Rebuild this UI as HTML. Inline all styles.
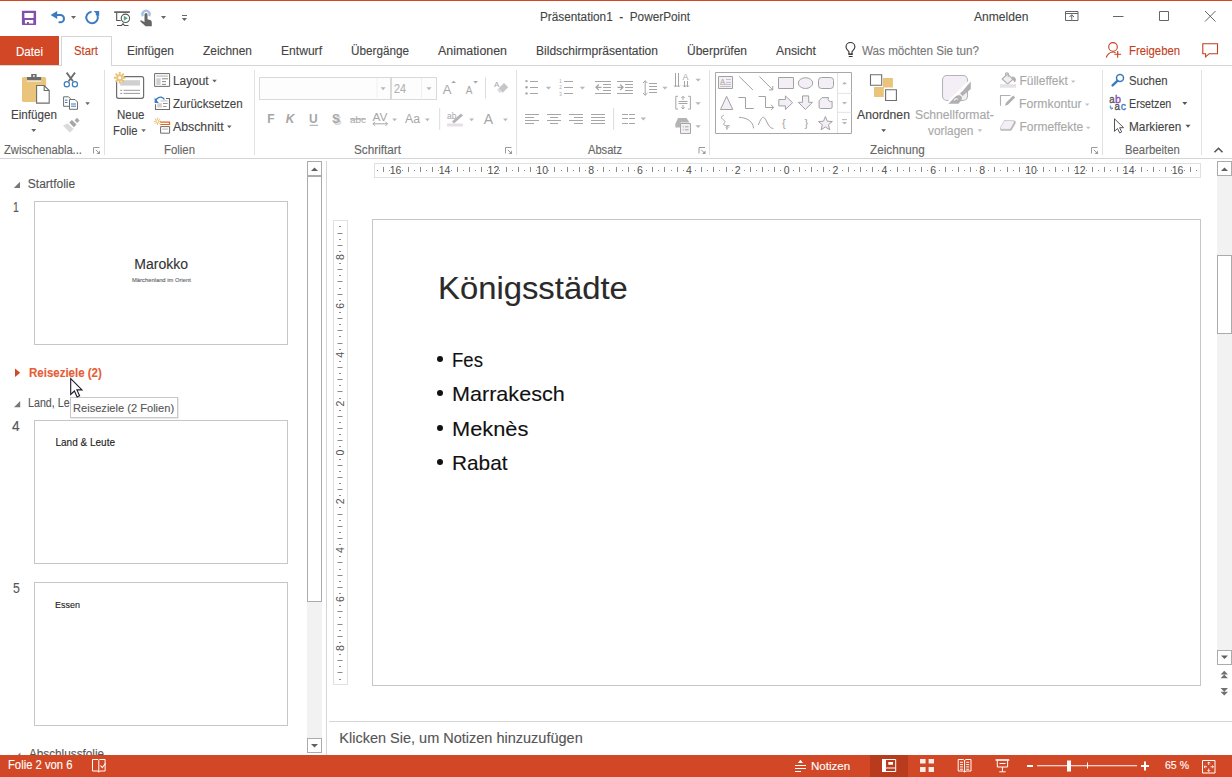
<!DOCTYPE html><html><head><meta charset="utf-8"><style>
html,body{margin:0;padding:0;width:1232px;height:777px;overflow:hidden;background:#fff;position:relative;font-family:"Liberation Sans",sans-serif}
.t{position:absolute;white-space:pre;transform-origin:0 0;-webkit-text-stroke:0.12px currentColor}
svg{overflow:visible}
</style></head><body>
<div style="position:absolute;left:0px;top:0px;width:1232px;height:1px;background:#d24726"></div>
<div class="t" style="left:540.00px;top:10.84px;font-size:12px;line-height:12px;color:#444;transform:scaleX(0.9819);">Präsentation1  -  PowerPoint</div>
<div class="t" style="left:974.00px;top:10.84px;font-size:12px;line-height:12px;color:#444;transform:scaleX(1.0081);">Anmelden</div>
<div style="position:absolute;left:0px;top:36px;width:59px;height:29px;background:#d24726"></div>
<div class="t" style="left:16.00px;top:45.84px;font-size:12px;line-height:12px;color:#fff;transform:scaleX(0.9636);">Datei</div>
<div style="position:absolute;left:61px;top:36px;width:51px;height:30px;background:#fff;border:1px solid #d5d5d5;border-bottom:none;box-sizing:border-box"></div>
<div style="position:absolute;left:0px;top:65px;width:61px;height:1px;background:#d5d5d5"></div>
<div style="position:absolute;left:112px;top:65px;width:1120px;height:1px;background:#d5d5d5"></div>
<div class="t" style="left:74.00px;top:45.04px;font-size:12px;line-height:12px;color:#c43e1c;transform:scaleX(0.9479);">Start</div>
<div class="t" style="left:127.00px;top:45.04px;font-size:12px;line-height:12px;color:#444;transform:scaleX(0.9916);">Einfügen</div>
<div class="t" style="left:203.00px;top:45.04px;font-size:12px;line-height:12px;color:#444;transform:scaleX(0.9923);">Zeichnen</div>
<div class="t" style="left:281.00px;top:45.04px;font-size:12px;line-height:12px;color:#444;transform:scaleX(1.0079);">Entwurf</div>
<div class="t" style="left:351.00px;top:45.04px;font-size:12px;line-height:12px;color:#444;transform:scaleX(0.9764);">Übergänge</div>
<div class="t" style="left:438.00px;top:45.04px;font-size:12px;line-height:12px;color:#444;transform:scaleX(1.0342);">Animationen</div>
<div class="t" style="left:536.00px;top:45.04px;font-size:12px;line-height:12px;color:#444;transform:scaleX(1.0051);">Bildschirmpräsentation</div>
<div class="t" style="left:687.00px;top:45.04px;font-size:12px;line-height:12px;color:#444;">Überprüfen</div>
<div class="t" style="left:776.00px;top:45.04px;font-size:12px;line-height:12px;color:#444;transform:scaleX(1.0163);">Ansicht</div>
<div class="t" style="left:862.00px;top:45.34px;font-size:12px;line-height:12px;color:#777;transform:scaleX(0.9726);">Was möchten Sie tun?</div>
<div class="t" style="left:1128.50px;top:45.34px;font-size:12px;line-height:12px;color:#c43e1c;transform:scaleX(0.9452);">Freigeben</div>
<div style="position:absolute;left:0px;top:158px;width:1232px;height:1px;background:#d5d5d5"></div>
<div style="position:absolute;left:104px;top:70px;width:1px;height:85px;background:#e1e1e1"></div>
<div style="position:absolute;left:254px;top:70px;width:1px;height:85px;background:#e1e1e1"></div>
<div style="position:absolute;left:516px;top:70px;width:1px;height:85px;background:#e1e1e1"></div>
<div style="position:absolute;left:709px;top:70px;width:1px;height:85px;background:#e1e1e1"></div>
<div style="position:absolute;left:1102px;top:70px;width:1px;height:85px;background:#e1e1e1"></div>
<div style="position:absolute;left:1201px;top:70px;width:1px;height:85px;background:#e1e1e1"></div>
<div class="t" style="left:4.00px;top:144.44px;font-size:12px;line-height:12px;color:#666;transform:scaleX(0.9353);">Zwischenabla...</div>
<div class="t" style="left:163.50px;top:144.44px;font-size:12px;line-height:12px;color:#666;transform:scaleX(0.9480);">Folien</div>
<div class="t" style="left:354.00px;top:144.44px;font-size:12px;line-height:12px;color:#666;transform:scaleX(0.9792);">Schriftart</div>
<div class="t" style="left:588.00px;top:144.44px;font-size:12px;line-height:12px;color:#666;transform:scaleX(0.9274);">Absatz</div>
<div class="t" style="left:870.00px;top:144.44px;font-size:12px;line-height:12px;color:#666;transform:scaleX(0.9761);">Zeichnung</div>
<div class="t" style="left:1124.70px;top:144.44px;font-size:12px;line-height:12px;color:#666;transform:scaleX(0.9428);">Bearbeiten</div>
<div class="t" style="left:10.50px;top:108.84px;font-size:12px;line-height:12px;color:#444;transform:scaleX(0.9705);">Einfügen</div>
<div class="t" style="left:116.50px;top:108.84px;font-size:12px;line-height:12px;color:#444;transform:scaleX(0.9589);">Neue</div>
<div class="t" style="left:113.00px;top:124.84px;font-size:12px;line-height:12px;color:#444;transform:scaleX(0.9409);">Folie</div>
<div class="t" style="left:173.40px;top:74.84px;font-size:12px;line-height:12px;color:#444;transform:scaleX(0.9872);">Layout</div>
<div class="t" style="left:173.00px;top:97.84px;font-size:12px;line-height:12px;color:#444;transform:scaleX(0.9659);">Zurücksetzen</div>
<div class="t" style="left:173.00px;top:120.54px;font-size:12px;line-height:12px;color:#444;transform:scaleX(1.0247);">Abschnitt</div>
<div class="t" style="left:857.00px;top:108.64px;font-size:12px;line-height:12px;color:#444;transform:scaleX(1.0169);">Anordnen</div>
<div class="t" style="left:915.00px;top:108.64px;font-size:12px;line-height:12px;color:#a8a8a8;transform:scaleX(1.0176);">Schnellformat-</div>
<div class="t" style="left:928.00px;top:125.34px;font-size:12px;line-height:12px;color:#a8a8a8;transform:scaleX(0.9865);">vorlagen</div>
<div class="t" style="left:1019.40px;top:74.54px;font-size:12px;line-height:12px;color:#a8a8a8;">Fülleffekt</div>
<div class="t" style="left:1019.40px;top:97.54px;font-size:12px;line-height:12px;color:#a8a8a8;transform:scaleX(1.0199);">Formkontur</div>
<div class="t" style="left:1019.40px;top:120.84px;font-size:12px;line-height:12px;color:#a8a8a8;">Formeffekte</div>
<div class="t" style="left:1129.00px;top:74.84px;font-size:12px;line-height:12px;color:#444;transform:scaleX(0.9464);">Suchen</div>
<div class="t" style="left:1129.00px;top:97.54px;font-size:12px;line-height:12px;color:#444;transform:scaleX(0.8935);">Ersetzen</div>
<div class="t" style="left:1129.00px;top:121.24px;font-size:12px;line-height:12px;color:#444;transform:scaleX(0.9824);">Markieren</div>
<div style="position:absolute;left:259px;top:77px;width:132px;height:23px;border:1px solid #d9d9d9;box-sizing:border-box;background:#fdfdfd"></div>
<div style="position:absolute;left:391px;top:77px;width:46px;height:23px;border:1px solid #d9d9d9;box-sizing:border-box;background:#fdfdfd"></div>
<div class="t" style="left:394.00px;top:82.84px;font-size:12px;line-height:12px;color:#b0b0b0;transform:scaleX(0.9009);">24</div>
<div class="t" style="left:27.80px;top:177.64px;font-size:12px;line-height:12px;color:#555;">Startfolie</div>
<div class="t" style="left:13.00px;top:199.85px;font-size:14px;line-height:14px;color:#555;transform:scaleX(0.7465);">1</div>
<div style="position:absolute;left:34px;top:201px;width:254px;height:144px;border:1px solid #c6c6c6;box-sizing:border-box;background:#fff"></div>
<div class="t" style="left:134.30px;top:256.95px;font-size:14px;line-height:14px;color:#333;">Marokko</div>
<div class="t" style="left:131.70px;top:277.94px;font-size:5.5px;line-height:5.5px;color:#666;transform:scaleX(1.0569);">Märchenland im Orient</div>
<div class="t" style="left:29.00px;top:367.24px;font-size:12px;line-height:12px;color:#e65d37;font-weight:bold;transform:scaleX(0.9576);">Reiseziele (2)</div>
<div class="t" style="left:28.40px;top:397.24px;font-size:12px;line-height:12px;color:#555;transform:scaleX(0.8900);">Land, Le</div>
<div class="t" style="left:12.20px;top:419.45px;font-size:14px;line-height:14px;color:#555;transform:scaleX(0.9781);">4</div>
<div style="position:absolute;left:34px;top:420px;width:254px;height:144px;border:1px solid #c6c6c6;box-sizing:border-box;background:#fff"></div>
<div class="t" style="left:55.50px;top:437.74px;font-size:10px;line-height:10px;color:#222;">Land & Leute</div>
<div class="t" style="left:12.70px;top:580.85px;font-size:14px;line-height:14px;color:#555;transform:scaleX(0.8752);">5</div>
<div style="position:absolute;left:34px;top:582px;width:254px;height:144px;border:1px solid #c6c6c6;box-sizing:border-box;background:#fff"></div>
<div class="t" style="left:55.40px;top:599.96px;font-size:9.5px;line-height:9.5px;color:#222;transform:scaleX(0.9466);">Essen</div>
<div class="t" style="left:29.00px;top:747.84px;font-size:12px;line-height:12px;color:#555;transform:scaleX(0.9781);">Abschlussfolie</div>
<div style="position:absolute;left:70px;top:397px;width:108px;height:21px;border:1px solid #c8c8c8;box-sizing:border-box;background:#fff;box-shadow:1px 1px 1px rgba(0,0,0,.08)"></div>
<div class="t" style="left:73.40px;top:403.29px;font-size:11px;line-height:11px;color:#575757;transform:scaleX(1.0083);">Reiseziele (2 Folien)</div>
<div style="position:absolute;left:307px;top:161px;width:15px;height:592px;background:#f2f2f2"></div>
<div style="position:absolute;left:307px;top:161px;width:15px;height:15px;border:1px solid #ababab;box-sizing:border-box;background:#fff"></div>
<div style="position:absolute;left:307px;top:176px;width:15px;height:426px;border:1px solid #ababab;box-sizing:border-box;background:#fff"></div>
<div style="position:absolute;left:307px;top:738px;width:15px;height:15px;border:1px solid #ababab;box-sizing:border-box;background:#fff"></div>
<div style="position:absolute;left:326px;top:161px;width:1px;height:594px;background:#d5d5d5"></div>
<div style="position:absolute;left:374px;top:163px;width:827px;height:15px;border:1px solid #e0e0e0;box-sizing:border-box"></div>
<div style="position:absolute;left:333px;top:220px;width:15px;height:465px;border:1px solid #e0e0e0;box-sizing:border-box"></div>
<div style="position:absolute;left:372px;top:219px;width:829px;height:467px;border:1px solid #c6c6c6;box-sizing:border-box;background:#fff"></div>
<div class="t" style="left:437.90px;top:272.31px;font-size:32px;line-height:32px;color:#2a2a2a;transform:scaleX(1.0256);">Königsstädte</div>
<div style="position:absolute;left:437.2px;top:355.7px;width:6px;height:6px;border-radius:50%;background:#111"></div>
<div class="t" style="left:452.40px;top:349.02px;font-size:21px;line-height:21px;color:#111;transform:scaleX(0.8837);">Fes</div>
<div style="position:absolute;left:437.2px;top:390.09999999999997px;width:6px;height:6px;border-radius:50%;background:#111"></div>
<div class="t" style="left:452.40px;top:383.42px;font-size:21px;line-height:21px;color:#111;transform:scaleX(1.0280);">Marrakesch</div>
<div style="position:absolute;left:437.2px;top:424.5px;width:6px;height:6px;border-radius:50%;background:#111"></div>
<div class="t" style="left:452.40px;top:417.82px;font-size:21px;line-height:21px;color:#111;transform:scaleX(1.0381);">Meknès</div>
<div style="position:absolute;left:437.2px;top:458.9px;width:6px;height:6px;border-radius:50%;background:#111"></div>
<div class="t" style="left:452.40px;top:452.22px;font-size:21px;line-height:21px;color:#111;transform:scaleX(0.9916);">Rabat</div>
<div style="position:absolute;left:1217px;top:161px;width:15px;height:504px;background:#f2f2f2"></div>
<div style="position:absolute;left:1217px;top:161px;width:15px;height:15px;border:1px solid #ababab;box-sizing:border-box;background:#fff"></div>
<div style="position:absolute;left:1217px;top:255px;width:15px;height:79px;border:1px solid #ababab;box-sizing:border-box;background:#fff"></div>
<div style="position:absolute;left:1217px;top:650px;width:15px;height:15px;border:1px solid #ababab;box-sizing:border-box;background:#fff"></div>
<div style="position:absolute;left:329px;top:721px;width:903px;height:1px;background:#d5d5d5"></div>
<div class="t" style="left:339.30px;top:730.93px;font-size:14.5px;line-height:14.5px;color:#555;">Klicken Sie, um Notizen hinzuzufügen</div>
<div style="position:absolute;left:0px;top:755px;width:1232px;height:22px;background:#d24726"></div>
<div class="t" style="left:8.40px;top:759.34px;font-size:12px;line-height:12px;color:#fff;transform:scaleX(0.9374);">Folie 2 von 6</div>
<div class="t" style="left:811.40px;top:760.89px;font-size:11px;line-height:11px;color:#fff;transform:scaleX(1.0512);">Notizen</div>
<div style="position:absolute;left:870px;top:755px;width:38px;height:22px;background:#b83b1e"></div>
<div class="t" style="left:1165.00px;top:759.69px;font-size:11px;line-height:11px;color:#fff;transform:scaleX(0.9569);">65 %</div>
<svg style="position:absolute;left:0;top:0;pointer-events:none" width="1232" height="777" viewBox="0 0 1232 777"><path d="M22.6 10.8h12.8a.7.7 0 0 1 .7.7v12.7a.7.7 0 0 1-.7.7h-12.8a.7.7 0 0 1-.7-.7v-12.7a.7.7 0 0 1 .7-.7z M24.4 12.9v5.1h9.2v-5.1z M24.9 20v3.6h2.1v-1.6h1.9v1.6h4.4v-3.6z" fill="#8150aa" fill-rule="evenodd"/><path d="M55.5 15 H60.3 A3.65 3.65 0 0 1 60.3 22.3 H58.6" fill="none" stroke="#3b7bbf" stroke-width="2.1"/><path d="M50.6 15 L57.2 10.9 V19.1 Z" fill="#3b7bbf"/><path d="M71 16h5l-2.5 3z" fill="#666"/><path d="M96.2 13.4 A5.8 5.8 0 1 1 91.6 11.7" fill="none" stroke="#3b7bbf" stroke-width="2"/><path d="M93.6 10.9 H99.2 V16.5 Z" fill="#3b7bbf"/><path d="M114.2 11.3h15.7v1.6h-15.7z" fill="#555"/><path d="M116.7 12.9v7.6h4" fill="none" stroke="#555" stroke-width="1.1"/><circle cx="125.4" cy="18.3" r="4.2" fill="#fff" stroke="#555" stroke-width="1.1"/><path d="M123.8 15.8v5l4-2.5z" fill="#5aa384"/><path d="M117 25.5h4.5l1.5-1.8 1.5 1.8h4" fill="none" stroke="#555" stroke-width="1.1"/><path d="M142.9 16.2A3.6 3.6 0 1 1 149.1 16.2" fill="none" stroke="#a4c2e4" stroke-width="2.3"/><path d="M144.5 14.6a1.5 1.5 0 0 1 3 0v4.6l2.6.7c1.2.3 1.7 1.3 1.7 2.5v3.8h-6.2l-5-4.5c-.7-.7 0-1.7.9-1.3l3 1.5z" fill="#666"/><path d="M161 16h5l-2.5 3z" fill="#666"/><path d="M182 15h5v1h-5z" fill="#666"/><path d="M181.8 18h5.2l-2.6 3z" fill="#666"/><path d="M1065.5 11.5h12.5v9h-12.5z M1065.5 13.5h12.5 M1071.75 19.8v-5 M1069.5 17l2.25-2.3 2.25 2.3" fill="none" stroke="#666" stroke-width="1"/><path d="M1113 16.5h10.5" stroke="#666" stroke-width="1"/><path d="M1159.5 11.5h9v9h-9z" fill="none" stroke="#666" stroke-width="1"/><path d="M1205 11l10.5 10.5 M1215.5 11l-10.5 10.5" stroke="#666" stroke-width="1"/><path d="M848.9 54.3v-2.7c-1.6-1.5-2.9-2.6-2.9-4.6a4.45 4.45 0 0 1 8.9 0c0 2-1.3 3.1-2.9 4.6v2.7z" fill="none" stroke="#333" stroke-width="1.1"/><path d="M848.6 53.6h4.2v1.2h-4.2z M848.8 56.1h3.8v.9h-3.8z" fill="#333"/><circle cx="1113" cy="46.9" r="4.3" fill="none" stroke="#c43e1c" stroke-width="1.1"/><path d="M1106.3 57.6c.6-3.3 3.7-5.6 7-5.6c.8 0 1.6.1 2.3.4" fill="none" stroke="#c43e1c" stroke-width="1.1"/><path d="M1114.3 54.3h6.8 M1117.7 50.9v6.8" stroke="#c43e1c" stroke-width="1.1"/><path d="M1202.8 43.7h14.7v10h-8.3l-3.6 3.2v-3.2h-2.8z" fill="none" stroke="#c43e1c" stroke-width="1.1"/><rect x="22" y="77" width="24.1" height="25" rx="1.6" fill="#ebc47c"/><path d="M27 77h14.1v3.6h-14.1z" fill="#6d6d6d"/><path d="M31.2 74.1h5.4v3h-5.4z" fill="#6d6d6d"/><path d="M33 75.2h1.8v1.6h-1.8z" fill="#fff"/><path d="M27 80.6h14.1v1h-14.1z" fill="#fff"/><path d="M36.6 85.5h7.6l5 5v12.6h-12.6z" fill="#fff" stroke="#6d6d6d" stroke-width="1.1"/><path d="M44.2 85.5v5h5" fill="none" stroke="#6d6d6d" stroke-width="1.1"/><path d="M31.2 129h5l-2.5 3z" fill="#666"/><path d="M66.6 72.6L73 81.2 M75 72.6L68.6 81.2" stroke="#6d6d6d" stroke-width="1.8"/><circle cx="66.8" cy="84.3" r="2.6" fill="none" stroke="#3b7bbf" stroke-width="1.2"/><circle cx="74.9" cy="84.3" r="2.6" fill="none" stroke="#3b7bbf" stroke-width="1.2"/><path d="M63.6 96.8h5l1.8 1.8v7.7h-6.8z" fill="#fff" stroke="#6d6d6d" stroke-width="1"/><path d="M69.5 99.5h5.5l2.5 2.5v7.3h-8z" fill="#fff" stroke="#6d6d6d" stroke-width="1"/><path d="M65 100.2h2.5 M65 102.5h2.5 M71 104h5 M71 106.2h5" stroke="#3b7bbf" stroke-width="1"/><path d="M85.3 102.2h4.6l-2.3 2.8z" fill="#666"/><path d="M74.5 120.3l2.5-2.5 2.6 2.6-2.5 2.5z" fill="#aaa"/><path d="M69.3 122.6l2.6-2.6 4.6 4.6-2.6 2.6z" fill="#a6a6a6"/><path d="M63 125.4l4.7-2 6 5.6-4 3.4z" fill="#dcd8dc"/><rect x="116.6" y="76.6" width="27" height="21.7" rx="2" fill="#fff" stroke="#6d6d6d" stroke-width="1.2"/><path d="M120.2 80.2h19.8v5.4h-19.8z" fill="#d0d0d0"/><path d="M120.2 90.3h2 M123.5 90.3h16.5 M120.2 93.4h2 M123.5 93.4h16.5" stroke="#9a9a9a" stroke-width="1"/><circle cx="119.7" cy="77.7" r="4.2" fill="#fff"/><path d="M122.60 77.70L125.50 77.70M121.75 79.75L123.80 81.80M119.70 80.60L119.70 83.50M117.65 79.75L115.60 81.80M116.80 77.70L113.90 77.70M117.65 75.65L115.60 73.60M119.70 74.80L119.70 71.90M121.75 75.65L123.80 73.60" stroke="#ebc070" stroke-width="1.9"/><circle cx="119.7" cy="77.7" r="2.4" fill="#fff" stroke="#ebc070" stroke-width="1.6"/><path d="M141.3 129.3h4.6l-2.3 2.8z" fill="#666"/><path d="M154.6 73.6h15v12.8h-15z" fill="#fff" stroke="#6d6d6d" stroke-width="1"/><path d="M156.3 75.3h11.6v1.7h-11.6z M156.3 78.3h4.3v6.6h-4.3z" fill="#d0d0d0"/><path d="M162 78.8h6 M162 81.6h4 M162 84.4h4" stroke="#7a7a7a" stroke-width=".9"/><path d="M212.2 79.7h4.6l-2.3 2.8z" fill="#666"/><path d="M166 98.5h3.5v11h-14v-5.2" fill="none" stroke="#6d6d6d" stroke-width="1.1"/><path d="M157.3 103.3h4.5v4.3h-4.5z M160.5 100.3h7.2v1.3h-7.2z" fill="#d0d0d0"/><path d="M163 103.5h4.7 M163 106.5h3.7" stroke="#8a8a8a" stroke-width=".9"/><path d="M164.3 99.6c-1-2.6-4.8-3.6-7.6-.6l-1.2 2.8" fill="none" stroke="#3b7bbf" stroke-width="1.4"/><path d="M154.6 97.4v5.5h4.2z" fill="#3b7bbf"/><path d="M159.00 121.30L161.00 121.30M158.53 122.43L159.95 123.85M157.40 122.90L157.40 124.90M156.27 122.43L154.85 123.85M155.80 121.30L153.80 121.30M156.27 120.17L154.85 118.75M157.40 119.70L157.40 117.70M158.53 120.17L159.95 118.75" stroke="#ebc070" stroke-width="1"/><circle cx="157.4" cy="121.3" r="1.4" fill="none" stroke="#ebc070" stroke-width=".9"/><path d="M160.2 122.1h9.3v2.4h-9.3" fill="none" stroke="#e0661c" stroke-width="1.2"/><path d="M160.6 126.6h9v6.6h-9z" fill="#fff" stroke="#6d6d6d" stroke-width="1"/><path d="M162.3 128.3h5.8v1.6h-5.8z" fill="#d0d0d0"/><path d="M227 125.5h4.6l-2.3 2.8z" fill="#666"/><path d="M377 78v20 M421.5 78v20" stroke="#f0f0f0" stroke-width="1"/><path d="M380.6 87.2h5l-2.5 3z" fill="#b8b8b8"/><path d="M426.5 87.2h5l-2.5 3z" fill="#b8b8b8"/><text x="442.8" y="94.2" font-family="Liberation Sans" font-size="13" fill="#a6a6a6" font-weight="normal" font-style="normal" >A</text><path d="M451.3 83h4.7l-2.35-2.3z" fill="#a6a6a6"/><text x="465.8" y="94.2" font-family="Liberation Sans" font-size="10" fill="#a6a6a6" font-weight="normal" font-style="normal" >A</text><path d="M473.2 81h4.8l-2.4 2.4z" fill="#a6a6a6"/><path d="M485.5 77.5v21" stroke="#dcdcdc" stroke-width="1"/><text x="494" y="87" font-family="Liberation Sans" font-size="8" fill="#a6a6a6" font-weight="normal" font-style="normal" >A</text><path d="M498.5 88.5l5.5-5.5 4.2 4.2-5.5 5.5z" fill="#c6c6c6"/><path d="M498.5 88.5l3.2 3.2-1.6 1.6-3.2-3.2z" fill="#e0dbe3"/><text x="267.2" y="123" font-family="Liberation Sans" font-size="12" fill="#a6a6a6" font-weight="bold" font-style="normal" >F</text><text x="285.8" y="123" font-family="Liberation Sans" font-size="12" fill="#a6a6a6" font-weight="bold" font-style="italic" >K</text><text x="309" y="123" font-family="Liberation Sans" font-size="12" fill="#a6a6a6" font-weight="bold" font-style="normal" >U</text><path d="M309.5 125.3h8.6" stroke="#a6a6a6" stroke-width="1"/><text x="333.5" y="124.5" font-family="Liberation Sans" font-size="12" fill="#d8d8d8" font-weight="bold" font-style="normal" >S</text><text x="332" y="123" font-family="Liberation Sans" font-size="12" fill="#a6a6a6" font-weight="bold" font-style="normal" >S</text><text x="350" y="122.5" font-family="Liberation Sans" font-size="9.5" fill="#a6a6a6" font-weight="normal" font-style="normal" textLength="15.8" lengthAdjust="spacingAndGlyphs">abc</text><path d="M350 119h15.8" stroke="#a6a6a6" stroke-width="1"/><text x="372.5" y="121" font-family="Liberation Sans" font-size="11" fill="#a6a6a6" font-weight="normal" font-style="normal" textLength="15" lengthAdjust="spacingAndGlyphs">AV</text><path d="M373 123.8h14.5 M375 121.8l-2 2 2 2 M385.5 121.8l2 2-2 2" fill="none" stroke="#a6a6a6" stroke-width="1"/><path d="M392.2 118.5h4.8l-2.4 2.8z" fill="#b8b8b8"/><text x="405" y="123.2" font-family="Liberation Sans" font-size="12.5" fill="#a6a6a6" font-weight="normal" font-style="normal" textLength="15" lengthAdjust="spacingAndGlyphs">Aa</text><path d="M425 118.5h4.8l-2.4 2.8z" fill="#b8b8b8"/><path d="M439.7 108v22" stroke="#dcdcdc" stroke-width="1"/><text x="447" y="119" font-family="Liberation Sans" font-size="8.5" fill="#a6a6a6" font-weight="normal" font-style="normal" >ab</text><path d="M452 121.5l9-8 2 2-9 8z" fill="#b4b4b4"/><path d="M447 123.5h16v3h-16z" fill="#e6dfe6"/><path d="M469.2 118.5h4.8l-2.4 2.8z" fill="#b8b8b8"/><text x="483.8" y="123.7" font-family="Liberation Sans" font-size="14" fill="#a6a6a6" font-weight="normal" font-style="normal" >A</text><path d="M503 118.5h4.8l-2.4 2.8z" fill="#b8b8b8"/><circle cx="526.5" cy="81.1" r="1.2" fill="#a6a6a6"/><path d="M530 81.5h8" stroke="#a6a6a6" stroke-width="1"/><path d="M564 81.5h9" stroke="#a6a6a6" stroke-width="1"/><circle cx="526.5" cy="87.3" r="1.2" fill="#a6a6a6"/><path d="M530 87.5h8" stroke="#a6a6a6" stroke-width="1"/><path d="M564 87.5h9" stroke="#a6a6a6" stroke-width="1"/><circle cx="526.5" cy="93.4" r="1.2" fill="#a6a6a6"/><path d="M530 93.5h8" stroke="#a6a6a6" stroke-width="1"/><path d="M564 93.5h9" stroke="#a6a6a6" stroke-width="1"/><path d="M545.8 86.8h5.4l-2.7 2.8z" fill="#b8b8b8"/><path d="M579.7 86.8h5.4l-2.7 2.8z" fill="#b8b8b8"/><text x="559.2" y="83.2" font-family="Liberation Sans" font-size="4.5" fill="#a6a6a6" font-weight="normal" font-style="normal" >1</text><text x="559.2" y="89.4" font-family="Liberation Sans" font-size="4.5" fill="#a6a6a6" font-weight="normal" font-style="normal" >2</text><text x="559.2" y="95.5" font-family="Liberation Sans" font-size="4.5" fill="#a6a6a6" font-weight="normal" font-style="normal" >3</text><path d="M595 81.5h16" stroke="#a6a6a6" stroke-width="1"/><path d="M595 93.5h16" stroke="#a6a6a6" stroke-width="1"/><path d="M603 84.5h8" stroke="#a6a6a6" stroke-width="1"/><path d="M625 84.5h8" stroke="#a6a6a6" stroke-width="1"/><path d="M603 87.5h8" stroke="#a6a6a6" stroke-width="1"/><path d="M625 87.5h8" stroke="#a6a6a6" stroke-width="1"/><path d="M603 90.5h8" stroke="#a6a6a6" stroke-width="1"/><path d="M625 90.5h8" stroke="#a6a6a6" stroke-width="1"/><path d="M617 81.5h16" stroke="#a6a6a6" stroke-width="1"/><path d="M617 93.5h16" stroke="#a6a6a6" stroke-width="1"/><path d="M601.5 87.3h-5.5 M598.8 84.5l-2.8 2.8 2.8 2.8" fill="none" stroke="#a6a6a6" stroke-width="1.3"/><path d="M617.5 87.3h5.5 M620.2 84.5l2.8 2.8-2.8 2.8" fill="none" stroke="#a6a6a6" stroke-width="1.3"/><path d="M645.2 80.8v14.5 M643 83l2.2-2.2 2.2 2.2 M643 93l2.2 2.2 2.2-2.2" fill="none" stroke="#a6a6a6" stroke-width="1"/><path d="M649 83.5h8" stroke="#a6a6a6" stroke-width="1"/><path d="M649 86.5h8" stroke="#a6a6a6" stroke-width="1"/><path d="M649 89.5h8" stroke="#a6a6a6" stroke-width="1"/><path d="M649 92.5h8" stroke="#a6a6a6" stroke-width="1"/><path d="M662.2 86.8h5.4l-2.7 2.8z" fill="#b8b8b8"/><path d="M675.5 73v14 M678.5 73v14 M684.5 81v6 M687.5 81v6 M674 85.5l1.5 1.5 1.5-1.5 M677 85.5l1.5 1.5 1.5-1.5 M683 85.5l1.5 1.5 1.5-1.5 M686 85.5l1.5 1.5 1.5-1.5" fill="none" stroke="#a6a6a6" stroke-width="1"/><text x="682.6" y="80" font-family="Liberation Sans" font-size="9" fill="#a6a6a6" font-weight="normal" font-style="normal" >A</text><path d="M695.4 78.8h5.4l-2.7 2.8z" fill="#b8b8b8"/><path d="M678 96.3h-2.2v12.8h2.2 M688.2 96.3h2.2v12.8h-2.2" fill="none" stroke="#a6a6a6" stroke-width="1"/><path d="M678.5 101.5h9 M678.5 103.5h9 M683 96.5v3.5 M681.3 98l1.7-1.7 1.7 1.7 M683 105v4 M681.3 107.3l1.7 1.7 1.7-1.7" fill="none" stroke="#a6a6a6" stroke-width="1"/><path d="M695.4 102.2h5.4l-2.7 2.8z" fill="#b8b8b8"/><path d="M678 118h8.5l3 4.5h-9v5h-5.2l0-3.5z" fill="#b4b4b4"/><path d="M680.5 123.5h10v10h-10z" fill="#f3eff5" stroke="#a6a6a6" stroke-width="1"/><path d="M682.8 126.8h1 M685 126.8h3.5 M682.8 129.8h1 M685 129.8h3.5" stroke="#a6a6a6" stroke-width="1"/><path d="M695.4 125.3h5.4l-2.7 2.8z" fill="#b8b8b8"/><path d="M525 114.5h14" stroke="#a6a6a6" stroke-width="1"/><path d="M547 114.5h14" stroke="#a6a6a6" stroke-width="1"/><path d="M569 114.5h14" stroke="#a6a6a6" stroke-width="1"/><path d="M591 114.5h14" stroke="#a6a6a6" stroke-width="1"/><path d="M525 117.5h9" stroke="#a6a6a6" stroke-width="1"/><path d="M550 117.5h8" stroke="#a6a6a6" stroke-width="1"/><path d="M574 117.5h9" stroke="#a6a6a6" stroke-width="1"/><path d="M591 117.5h14" stroke="#a6a6a6" stroke-width="1"/><path d="M525 120.5h14" stroke="#a6a6a6" stroke-width="1"/><path d="M547 120.5h14" stroke="#a6a6a6" stroke-width="1"/><path d="M569 120.5h14" stroke="#a6a6a6" stroke-width="1"/><path d="M591 120.5h14" stroke="#a6a6a6" stroke-width="1"/><path d="M525 123.5h9" stroke="#a6a6a6" stroke-width="1"/><path d="M550 123.5h8" stroke="#a6a6a6" stroke-width="1"/><path d="M574 123.5h9" stroke="#a6a6a6" stroke-width="1"/><path d="M591 123.5h14" stroke="#a6a6a6" stroke-width="1"/><path d="M613.6 108v22" stroke="#dcdcdc" stroke-width="1"/><path d="M622 114.5h6" stroke="#a6a6a6" stroke-width="1"/><path d="M629 114.5h6" stroke="#a6a6a6" stroke-width="1"/><path d="M622 118.5h6" stroke="#a6a6a6" stroke-width="1"/><path d="M629 118.5h6" stroke="#a6a6a6" stroke-width="1"/><path d="M622 123.5h6" stroke="#a6a6a6" stroke-width="1"/><path d="M629 123.5h6" stroke="#a6a6a6" stroke-width="1"/><path d="M640.6 117.6h5.4l-2.7 2.8z" fill="#b8b8b8"/><path d="M715.5 72.5h136v61h-136z" fill="#fff" stroke="#a8a8a8" stroke-width="1"/><path d="M837.5 73v60 M838 93.4h13.5 M838 112.3h13.5" stroke="#e3e3e3" stroke-width="1"/><path d="M718.5 76.5h14v12h-14z" fill="#f4eff6" stroke="#a2a2a2" stroke-width="1"/><text x="720.3" y="83.6" font-family="Liberation Sans" font-size="7" fill="#a2a2a2" font-weight="normal" font-style="normal" >A</text><path d="M726 79.5h5 M726 82.5h5 M720 84.5h11 M720 86.5h11" stroke="#c4c0c6" stroke-width="1"/><path d="M739.1 76.4L752.9 89.9" fill="none" stroke="#a2a2a2" stroke-width="1"/><path d="M759.3 76.4L772.8 89.9 M772.8 86v3.9h-3.9" fill="none" stroke="#a2a2a2" stroke-width="1"/><path d="M778.5 77.5h15v11h-15z" fill="#f4eff6" stroke="#a2a2a2" stroke-width="1"/><ellipse cx="805.5" cy="83.1" rx="7.2" ry="5.4" fill="#f4eff6" stroke="#a2a2a2" stroke-width="1"/><rect x="818.5" y="77.5" width="15" height="11" rx="3" fill="#f4eff6" stroke="#a2a2a2" stroke-width="1"/><path d="M726.6 96.3L720.5 109.5h12.3z" fill="#f4eff6" stroke="#a2a2a2" stroke-width="1"/><path d="M738.3 97.5h7.2v11h8.3" fill="none" stroke="#a2a2a2" stroke-width="1"/><path d="M758.5 96.5h7v11h8 M771 104.8l2.7 2.7-2.7 2.7" fill="none" stroke="#a2a2a2" stroke-width="1"/><path d="M778.8 99.5h6.6v-3.6l7.2 6.8-7.2 6.8v-3.6h-6.6z" fill="#f4eff6" stroke="#a2a2a2" stroke-width="1"/><path d="M802.5 95.9h6.2v6.4h3.8l-7.1 7.1-7.1-7.1h4.2z" fill="#f4eff6" stroke="#a2a2a2" stroke-width="1"/><path d="M822 97.6h6.5a2.6 2.6 0 0 0 3.6 3.6v5.8a1.5 1.5 0 0 1-1.5 1.5h-10a1.5 1.5 0 0 1-1.5-1.5v-6.2z" fill="#f4eff6" stroke="#a2a2a2" stroke-width="1"/><path d="M723.8 115.2c-2.5 1-3 2.5-1.2 4c1.6 1.3 3.3 2 1.8 3.6c-1.3 1.3-.6 2.4.8 2.6c1.7.3 3.6 1.4 2.7 2.6c-.8 1-2.2.2-1.6-1.2c.5-1.2 2.5-1.5 3.6-.8 M726.5 128.5l.6 1.2" fill="none" stroke="#a2a2a2" stroke-width="1"/><path d="M739.1 117.4c6 0 14 3 14.5 11" fill="none" stroke="#a2a2a2" stroke-width="1"/><path d="M758.3 125c2-5 3.5-8 5.2-7.7c3 .5 4 11 9.9 11.2" fill="none" stroke="#a2a2a2" stroke-width="1"/><text x="782" y="127.3" font-family="Liberation Sans" font-size="11" fill="#a2a2a2" font-weight="normal" font-style="normal" >{</text><text x="804.6" y="127.3" font-family="Liberation Sans" font-size="11" fill="#a2a2a2" font-weight="normal" font-style="normal" >}</text><path d="M825.40 116.50L827.28 121.21L832.34 121.54L828.44 124.79L829.69 129.71L825.40 127.00L821.11 129.71L822.36 124.79L818.46 121.54L823.52 121.21z" fill="#f4eff6" stroke="#a2a2a2" stroke-width="1"/><path d="M842 84.2h5l-2.5-2.5z" fill="#b8b8b8"/><path d="M842 102h5l-2.5 2.5z" fill="#b8b8b8"/><path d="M842 119.6h5" stroke="#b8b8b8" stroke-width="1"/><path d="M842 122h5l-2.5 2.5z" fill="#b8b8b8"/><path d="M883 78h9.9v9.5h-9.9z M874 87.1h9.8v9.9h-9.8z" fill="#ebc47c"/><path d="M870.5 74.7h11.2v10.6h-11.2z" fill="none" stroke="#6d6d6d" stroke-width="1.1"/><path d="M885.6 89.7h10.8v10.8h-10.8z" fill="#fff" stroke="#6d6d6d" stroke-width="1.1"/><path d="M881.2 129.2h4.8l-2.4 2.7z" fill="#555"/><rect x="942.5" y="75.5" width="25" height="25" rx="4.5" fill="#f4eff6" stroke="#b4b4b4" stroke-width="1.1"/><path d="M945 106L973 78" stroke="#fff" stroke-width="2.6"/><path d="M970.8 81.6V89L966 93.2L963.3 90.3z M960.1 93.4l3-3 2.7 2.7-3 3z M948.3 103.7L955.8 96.3c1.8-1.6 4.4-1.4 5.6.3c1 1.4.6 3.3-.8 4.6L958.5 103.7z" fill="#b0b0b0"/><path d="M954 100.5c1-1.8 3-2.2 4-1.2" fill="none" stroke="#f4eff6" stroke-width="1.2"/><path d="M977.6 129.3h4.6l-2.3 2.6z" fill="#c0c0c0"/><path d="M1002.2 79l5.4-5.2 5.2 5.6-5.2 4.5z" fill="#f4eff6" stroke="#b0b0b0" stroke-width="1.1"/><path d="M1005.6 76.5v-3.6h2.6v4.4" fill="none" stroke="#b0b0b0" stroke-width="1"/><path d="M1011.5 76.5c2.2-.2 4.3 1 4.4 2.8c.1 1.5-.4 2.5-1.3 3.3l-1.8-2.8z" fill="#b0b0b0"/><path d="M1000 84.2h16v3.5h-16z" fill="#e6e0e8"/><path d="M1071 80.5h4.4l-2.2 2.5z" fill="#c0c0c0"/><path d="M1000.5 105.7v-10.2h10" fill="none" stroke="#b0b0b0" stroke-width="1.1"/><path d="M1005 105.8l1-3 7.2-7.2 1.9 1.9-7.2 7.2z" fill="#b0b0b0"/><path d="M1085 103.5h4.4l-2.2 2.5z" fill="#c0c0c0"/><path d="M1004.5 120.5h9.5a1.8 1.8 0 0 1 1.6 2.7l-3.7 6.6a1.8 1.8 0 0 1-1.6 1h-8.3a1.8 1.8 0 0 1-1.6-2.7l3.7-6.6a1.8 1.8 0 0 1 1.6-1z" fill="#b9b9b9"/><path d="M1004 120.6h8.6a1.5 1.5 0 0 1 1.3 2.3l-3.2 5.6a1.5 1.5 0 0 1-1.3.8h-7.4a1.5 1.5 0 0 1-1.3-2.3l3.2-5.6a1.5 1.5 0 0 1 1.3-.8z" fill="#f4eff6" stroke="#c0c0c0" stroke-width=".6"/><path d="M1086 126.8h4.4l-2.2 2.5z" fill="#c0c0c0"/><circle cx="1120" cy="78.1" r="3.5" fill="none" stroke="#3b7bbf" stroke-width="1.5"/><path d="M1117.4 80.8L1112.6 85.4" stroke="#3b7bbf" stroke-width="2.4" stroke-linecap="round"/><text x="1109.3" y="102.8" font-family="Liberation Sans" font-size="10.5" fill="#555" font-weight="normal" font-style="normal" stroke="#555" stroke-width=".35" textLength="5.4" lengthAdjust="spacingAndGlyphs">a</text><text x="1115" y="102.8" font-family="Liberation Sans" font-size="10.5" fill="#8a4fb0" font-weight="normal" font-style="normal" stroke="#8a4fb0" stroke-width=".35" textLength="6" lengthAdjust="spacingAndGlyphs">b</text><text x="1114.6" y="109.9" font-family="Liberation Sans" font-size="10.5" fill="#555" font-weight="normal" font-style="normal" stroke="#555" stroke-width=".35" textLength="5.4" lengthAdjust="spacingAndGlyphs">a</text><text x="1120.8" y="109.9" font-family="Liberation Sans" font-size="10.5" fill="#3b7bbf" font-weight="normal" font-style="normal" stroke="#3b7bbf" stroke-width=".35" textLength="5.2" lengthAdjust="spacingAndGlyphs">c</text><path d="M1110.3 105.5v2.8h2.4 M1111.5 107.2l1.2 1.1-1.2 1.1" fill="none" stroke="#3b7bbf" stroke-width=".9"/><path d="M1182.3 102h5l-2.5 3z" fill="#555"/><path d="M1114.5 118.8v12.5l3-2.8 2.2 4.4 2-1-2.1-4.2h4z" fill="#fff" stroke="#555" stroke-width="1" stroke-linejoin="round"/><path d="M1185.5 124.8h5l-2.5 3z" fill="#555"/><path d="M1214.5 152.3l4-4 4 4" fill="none" stroke="#555" stroke-width="1.6"/><path d="M93.5 153.5v-6h6" fill="none" stroke="#9a9a9a" stroke-width="1"/><path d="M95.8 149.8l3.2 3.2" fill="none" stroke="#9a9a9a" stroke-width="1"/><path d="M100 150.5v3.5h-3.5z" fill="#9a9a9a"/><path d="M505.5 153.5v-6h6" fill="none" stroke="#9a9a9a" stroke-width="1"/><path d="M507.8 149.8l3.2 3.2" fill="none" stroke="#9a9a9a" stroke-width="1"/><path d="M512 150.5v3.5h-3.5z" fill="#9a9a9a"/><path d="M699.0 153.5v-6h6" fill="none" stroke="#9a9a9a" stroke-width="1"/><path d="M701.3 149.8l3.2 3.2" fill="none" stroke="#9a9a9a" stroke-width="1"/><path d="M705.5 150.5v3.5h-3.5z" fill="#9a9a9a"/><path d="M1091.5 153.5v-6h6" fill="none" stroke="#9a9a9a" stroke-width="1"/><path d="M1093.8 149.8l3.2 3.2" fill="none" stroke="#9a9a9a" stroke-width="1"/><path d="M1098 150.5v3.5h-3.5z" fill="#9a9a9a"/><path d="M20 181.8v6.2h-6.2z" fill="#777"/><path d="M15 368.6v8.4l5.2-4.2z" fill="#d24726"/><path d="M20.2 401v6.2h-6.2z" fill="#777"/><path d="M20.4 752.5v2.5h-2.5z" fill="#777"/><path d="M70.7 378.5v16l3.7-3.5 2.7 5.9 2.5-1.2-2.7-5.8h5.1z" fill="#fff" stroke="#1a1a2a" stroke-width="1.1" stroke-linejoin="miter"/><path d="M311 171h7l-3.5-3.5z" fill="#606060"/><path d="M311 744h7l-3.5 3.5z" fill="#606060"/><path d="M1221 171h7l-3.5-3.5z" fill="#606060"/><path d="M1221 655.5h7l-3.5 3.5z" fill="#606060"/><path d="M1220.5 674.5h7.5l-3.75-3.8z M1220.5 678.3h7.5l-3.75-3.8z" fill="#707070"/><path d="M1220.5 688h7.5l-3.75 3.8z M1220.5 691.8h7.5l-3.75 3.8z" fill="#707070"/><path d="M377 170.5h1M383.5 167v5M389 170.5h1M402 170.5h1M408.5 167v5M414 170.5h1M420.5 167v5M426 170.5h1M432.5 167v5M438 170.5h1M451 170.5h1M457.5 167v5M463 170.5h1M469.5 167v5M475 170.5h1M481.5 167v5M487 170.5h1M499 170.5h1M506.5 167v5M512 170.5h1M518.5 167v5M524 170.5h1M530.5 167v5M536 170.5h1M548 170.5h1M554.5 167v5M561 170.5h1M567.5 167v5M573 170.5h1M579.5 167v5M585 170.5h1M597 170.5h1M603.5 167v5M609 170.5h1M616.5 167v5M622 170.5h1M628.5 167v5M634 170.5h1M646 170.5h1M652.5 167v5M658 170.5h1M664.5 167v5M671 170.5h1M677.5 167v5M683 170.5h1M695 170.5h1M701.5 167v5M707 170.5h1M713.5 167v5M719 170.5h1M726.5 167v5M732 170.5h1M744 170.5h1M750.5 167v5M756 170.5h1M762.5 167v5M768 170.5h1M774.5 167v5M780 170.5h1M793 170.5h1M799.5 167v5M805 170.5h1M811.5 167v5M817 170.5h1M823.5 167v5M829 170.5h1M842 170.5h1M848.5 167v5M854 170.5h1M860.5 167v5M866 170.5h1M872.5 167v5M878 170.5h1M890 170.5h1M897.5 167v5M903 170.5h1M909.5 167v5M915 170.5h1M921.5 167v5M927 170.5h1M939 170.5h1M945.5 167v5M952 170.5h1M958.5 167v5M964 170.5h1M970.5 167v5M976 170.5h1M988 170.5h1M994.5 167v5M1000 170.5h1M1007.5 167v5M1013 170.5h1M1019.5 167v5M1025 170.5h1M1037 170.5h1M1043.5 167v5M1049 170.5h1M1055.5 167v5M1062 170.5h1M1068.5 167v5M1074 170.5h1M1086 170.5h1M1092.5 167v5M1098 170.5h1M1104.5 167v5M1110 170.5h1M1117.5 167v5M1123 170.5h1M1135 170.5h1M1141.5 167v5M1147 170.5h1M1153.5 167v5M1159 170.5h1M1165.5 167v5M1171 170.5h1M1184 170.5h1M1190.5 167v5M1196 170.5h1" stroke="#8a8a8a" stroke-width="1"/><text x="395.6" y="173.8" text-anchor="middle" font-family="Liberation Sans" font-size="10.5" fill="#505050">16</text><text x="444.5" y="173.8" text-anchor="middle" font-family="Liberation Sans" font-size="10.5" fill="#505050">14</text><text x="493.4" y="173.8" text-anchor="middle" font-family="Liberation Sans" font-size="10.5" fill="#505050">12</text><text x="542.2" y="173.8" text-anchor="middle" font-family="Liberation Sans" font-size="10.5" fill="#505050">10</text><text x="591.1" y="173.8" text-anchor="middle" font-family="Liberation Sans" font-size="10.5" fill="#505050">8</text><text x="640.0" y="173.8" text-anchor="middle" font-family="Liberation Sans" font-size="10.5" fill="#505050">6</text><text x="688.9" y="173.8" text-anchor="middle" font-family="Liberation Sans" font-size="10.5" fill="#505050">4</text><text x="737.7" y="173.8" text-anchor="middle" font-family="Liberation Sans" font-size="10.5" fill="#505050">2</text><text x="786.6" y="173.8" text-anchor="middle" font-family="Liberation Sans" font-size="10.5" fill="#505050">0</text><text x="835.5" y="173.8" text-anchor="middle" font-family="Liberation Sans" font-size="10.5" fill="#505050">2</text><text x="884.4" y="173.8" text-anchor="middle" font-family="Liberation Sans" font-size="10.5" fill="#505050">4</text><text x="933.2" y="173.8" text-anchor="middle" font-family="Liberation Sans" font-size="10.5" fill="#505050">6</text><text x="982.1" y="173.8" text-anchor="middle" font-family="Liberation Sans" font-size="10.5" fill="#505050">8</text><text x="1031.0" y="173.8" text-anchor="middle" font-family="Liberation Sans" font-size="10.5" fill="#505050">10</text><text x="1079.8" y="173.8" text-anchor="middle" font-family="Liberation Sans" font-size="10.5" fill="#505050">12</text><text x="1128.7" y="173.8" text-anchor="middle" font-family="Liberation Sans" font-size="10.5" fill="#505050">14</text><text x="1177.6" y="173.8" text-anchor="middle" font-family="Liberation Sans" font-size="10.5" fill="#505050">16</text><text transform="translate(344.3 257.0) rotate(-90)" text-anchor="middle" font-family="Liberation Sans" font-size="10.5" fill="#505050">8</text><text transform="translate(344.3 305.9) rotate(-90)" text-anchor="middle" font-family="Liberation Sans" font-size="10.5" fill="#505050">6</text><text transform="translate(344.3 354.8) rotate(-90)" text-anchor="middle" font-family="Liberation Sans" font-size="10.5" fill="#505050">4</text><text transform="translate(344.3 403.6) rotate(-90)" text-anchor="middle" font-family="Liberation Sans" font-size="10.5" fill="#505050">2</text><text transform="translate(344.3 452.5) rotate(-90)" text-anchor="middle" font-family="Liberation Sans" font-size="10.5" fill="#505050">0</text><text transform="translate(344.3 501.4) rotate(-90)" text-anchor="middle" font-family="Liberation Sans" font-size="10.5" fill="#505050">2</text><text transform="translate(344.3 550.2) rotate(-90)" text-anchor="middle" font-family="Liberation Sans" font-size="10.5" fill="#505050">4</text><text transform="translate(344.3 599.1) rotate(-90)" text-anchor="middle" font-family="Liberation Sans" font-size="10.5" fill="#505050">6</text><text transform="translate(344.3 648.0) rotate(-90)" text-anchor="middle" font-family="Liberation Sans" font-size="10.5" fill="#505050">8</text><path d="M339 226.5h2M337.5 233.5h5M339 239.5h2M337.5 245.5h5M339 251.5h2M339 263.5h2M337.5 269.5h5M339 275.5h2M337.5 281.5h5M339 288.5h2M337.5 294.5h5M339 300.5h2M339 312.5h2M337.5 318.5h5M339 324.5h2M337.5 330.5h5M339 336.5h2M337.5 343.5h5M339 349.5h2M339 361.5h2M337.5 367.5h5M339 373.5h2M337.5 379.5h5M339 385.5h2M337.5 391.5h5M339 398.5h2M339 410.5h2M337.5 416.5h5M339 422.5h2M337.5 428.5h5M339 434.5h2M337.5 440.5h5M339 446.5h2M339 459.5h2M337.5 465.5h5M339 471.5h2M337.5 477.5h5M339 483.5h2M337.5 489.5h5M339 495.5h2M339 507.5h2M337.5 514.5h5M339 520.5h2M337.5 526.5h5M339 532.5h2M337.5 538.5h5M339 544.5h2M339 556.5h2M337.5 562.5h5M339 569.5h2M337.5 575.5h5M339 581.5h2M337.5 587.5h5M339 593.5h2M339 605.5h2M337.5 611.5h5M339 617.5h2M337.5 624.5h5M339 630.5h2M337.5 636.5h5M339 642.5h2M339 654.5h2M337.5 660.5h5M339 666.5h2M337.5 672.5h5M339 679.5h2" stroke="#8a8a8a" stroke-width="1"/><path d="M92.5 759.5h5.5l.8.8.8-.8h5.5v11.5h-5.5l-.8.8-.8-.8h-5.5z M98.8 760.5v12" fill="none" stroke="#fff" stroke-width="1"/><path d="M100.5 765.5l1.8 2.2 3.2-4.5" fill="none" stroke="#fff" stroke-width="1.1"/><path d="M795 765.5h11 M795 768.5h11 M795 771.5h6" fill="none" stroke="#fff" stroke-width="1"/><path d="M797.9 763h5.1l-2.55-3.2z" fill="#fff"/><path d="M882 759h4v13h-4z M888.3 762.1h4.7v2.6h-4.7z" fill="#fff"/><path d="M885 759.5h10.7v12h-10.7 M886 768h9.7" fill="none" stroke="#fff" stroke-width="1"/><path d="M920 759h5.6v4.4h-5.6z M928.6 759h5.4v4.4h-5.4z M920 767h5.6v5h-5.6z M928.6 767h5.4v5h-5.4z" fill="#fbece8"/><path d="M958.2 759.5v11.5h5l1.4 1 1.4-1h5v-11.5h-5l-1.4 1-1.4-1z M964.6 760.5v11.5 M960 762.3h3 M960 764.6h3 M960 766.9h3 M960 769.2h3 M966.2 762.3h3 M966.2 764.6h3 M966.2 766.9h3 M966.2 769.2h3" fill="none" stroke="#fff" stroke-width="1"/><path d="M995.6 759.2h13.6v1.6h-13.6z" fill="#fff"/><path d="M997.3 760.5v6.5h10.3v-6.5 M1002.45 767v4.5 M999.3 771.8h6.3 M999.5 763.5h6" fill="none" stroke="#fff" stroke-width="1"/><path d="M1027 765h6v2h-6z M1037 765.3h100v1h-100z M1067 760.5h4v11h-4z M1087 762.5h1v6h-1z M1141 765h8v2h-8z M1144 761.5h2v9h-2z" fill="#fff"/><path d="M1202.5 760.5h12.5v12.5h-12.5z" fill="none" stroke="#fff" stroke-width="1"/><path d="M1208.75 762v3 M1208.75 768.5v3 M1204 766.75h3 M1210.5 766.75h3 M1207.5 763.3l1.25-1.3 1.25 1.3 M1207.5 770.2l1.25 1.3 1.25-1.3 M1205.3 765.5l-1.3 1.25 1.3 1.25 M1212.2 765.5l1.3 1.25-1.3 1.25" fill="none" stroke="#fff" stroke-width=".9"/></svg>
</body></html>
